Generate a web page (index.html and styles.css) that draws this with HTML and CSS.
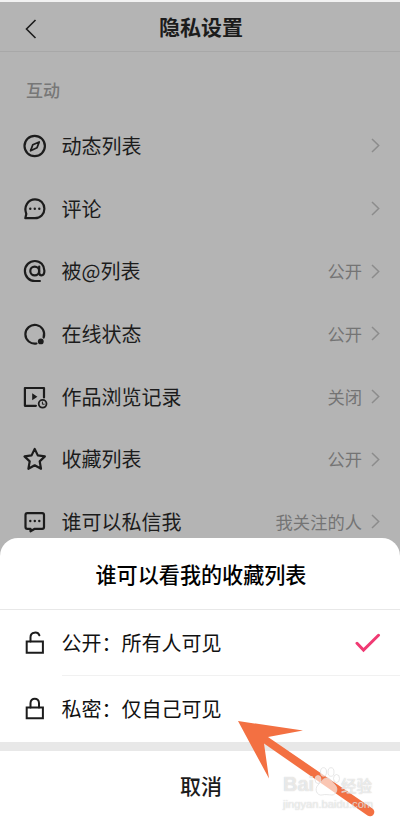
FILE: index.html
```html
<!DOCTYPE html>
<html lang="zh-CN">
<head>
    <meta charset="UTF-8">
    <title>隐私设置</title>
    <link rel="stylesheet" href="styles.css">
</head>
<body>
    <div class="page">
        <header class="topbar">
            <svg class="back" width="12" height="20" viewBox="0 0 12 20"><path d="M10.5 1L1.5 10l9 9"/></svg>
            <h1>隐私设置</h1>
        </header>
        <h2 class="section">互动</h2>
        <ul class="list">
            <li>
                <svg class="icon" width="26" height="26" viewBox="0 0 26 26"><circle cx="12.700" cy="13" r="10.2"/><path class="thin" d="M17.200 9l-2.200 5.800-6.400 2.900 2.200-5.900z"/></svg>
                <span class="label">动态列表</span>
                <svg class="arrow" width="9" height="15" viewBox="0 0 9 15"><path d="M1 1l6.7 6.5L1 14"/></svg>
            </li>
            <li>
                <svg class="icon" width="26" height="26" viewBox="0 0 26 26"><path d="M3.300 22.200l1-4.200C1.500 10.500 6 3.300 13 3.300c5.400 0 9.400 4.100 9.400 9.400s-4 9.500-9.400 9.500z"/><g class="dots"><circle cx="8.300" cy="12.800" r="1.200"/><circle cx="12.800" cy="12.800" r="1.200"/><circle cx="17.300" cy="12.800" r="1.200"/></g></svg>
                <span class="label">评论</span>
                <svg class="arrow" width="9" height="15" viewBox="0 0 9 15"><path d="M1 1l6.7 6.5L1 14"/></svg>
            </li>
            <li>
                <svg class="icon" width="26" height="26" viewBox="0 0 26 26"><circle cx="12.700" cy="13" r="4.400"/><path d="M17.200 8.500v6.300c0 1.700.9 2.500 2.300 2.500 2 0 2.900-1.700 2.900-4.500C22.400 7.300 18.400 3 12.900 3S2.900 7.400 2.900 13s4.400 10 10 10h5"/></svg>
                <span class="label">被@列表</span>
                <span class="value">公开</span>
                <svg class="arrow" width="9" height="15" viewBox="0 0 9 15"><path d="M1 1l6.7 6.5L1 14"/></svg>
            </li>
            <li>
                <svg class="icon" width="26" height="26" viewBox="0 0 26 26"><path d="M14.500 22.500A9.400 9.400 0 1 1 21.600 16.500"/><circle class="fill" cx="18.800" cy="20.400" r="2.900"/></svg>
                <span class="label">在线状态</span>
                <span class="value">公开</span>
                <svg class="arrow" width="9" height="15" viewBox="0 0 9 15"><path d="M1 1l6.7 6.5L1 14"/></svg>
            </li>
            <li>
                <svg class="icon" width="26" height="26" viewBox="0 0 26 26"><path d="M22 13.500V4H2.900v17.800h11"/><path class="fill" d="M10.200 9.300v7l5.200-3.500z"/><circle class="thin" cx="20.600" cy="19.800" r="3.900"/><path class="tiny" d="M20.400 18v2.200h1.800"/></svg>
                <span class="label">作品浏览记录</span>
                <span class="value">关闭</span>
                <svg class="arrow" width="9" height="15" viewBox="0 0 9 15"><path d="M1 1l6.7 6.5L1 14"/></svg>
            </li>
            <li>
                <svg class="icon" width="26" height="26" viewBox="0 0 26 26"><path d="M12.700 2.900l3.100 6.500 7.100 1-5.200 5 1.300 7.400-6.300-3.500-6.300 3.500 1.300-7.400-5.200-5 7.100-1z"/></svg>
                <span class="label">收藏列表</span>
                <span class="value">公开</span>
                <svg class="arrow" width="9" height="15" viewBox="0 0 9 15"><path d="M1 1l6.7 6.5L1 14"/></svg>
            </li>
            <li>
                <svg class="icon" width="26" height="26" viewBox="0 0 26 26"><path d="M5.300 4.200h14.900q1.800 0 1.800 1.800v12q0 1.800-1.800 1.800h-7.400L8.500 22.300v-2.500H5.300q-1.800 0-1.800-1.800V6q0-1.800 1.800-1.800z"/><g class="dots"><circle cx="8.300" cy="12" r="1.200"/><circle cx="12.800" cy="12" r="1.200"/><circle cx="17.300" cy="12" r="1.200"/></g></svg>
                <span class="label">谁可以私信我</span>
                <span class="value">我关注的人</span>
                <svg class="arrow" width="9" height="15" viewBox="0 0 9 15"><path d="M1 1l6.7 6.5L1 14"/></svg>
            </li>
        </ul>
    </div>

    <div class="sheet">
        <h3 class="sheet-title">谁可以看我的收藏列表</h3>
        <div class="option">
            <svg class="icon lock" width="26" height="26" viewBox="0 0 26 26"><path d="M4.700 11.500h16.200v11.300H4.700z"/><path d="M8.500 11.500V7.200c0-5.600 7.400-5.900 8.900-1.900"/></svg>
            <div class="option-body">
                <span>公开：所有人可见</span>
                <svg class="check" width="26" height="20" viewBox="0 0 26 20"><path d="M2 10.300l6.500 6.700L23.500 2.300"/></svg>
            </div>
        </div>
        <div class="option">
            <svg class="icon lock" width="26" height="26" viewBox="0 0 26 26"><path d="M4.700 11.500h16.200v10.800H4.700z"/><path d="M8.500 11.500V7.200c0-6 8.500-6 8.500 0v4.300"/></svg>
            <div class="option-body last">
                <span>私密：仅自己可见</span>
            </div>
        </div>
        <button class="cancel" type="button">取消</button>
    </div>

    <svg class="pointer" width="140" height="100" viewBox="0 0 140 100">
        <path d="M0 0l65 9.500-35 6.500L134.500 87.500a4.200 4.200 0 0 1-5 7L26 22.500l5 35z"/>
    </svg>

    <div class="watermark">
        <div class="brand">
            <span class="bai">Bai</span>
            <svg width="27" height="30" viewBox="0 0 27 30"><ellipse cx="4" cy="12.500" rx="3" ry="4"/><ellipse cx="9.500" cy="5" rx="3" ry="4.300"/><ellipse cx="17" cy="5" rx="3" ry="4.300"/><ellipse cx="22.500" cy="11.500" rx="3" ry="4"/><path d="M13 11c4 0 5 4 8 7 4 4 1 10-3 10-3 0-7-1-10 0-5 1-8-6-4-10 3-3 5-7 9-7z"/></svg>
            <span class="cn">经验</span>
        </div>
        <div class="site">jingyan.baidu.com</div>
    </div>
</body>
</html>
```
FILE: styles.css
```css
* {
    box-sizing: border-box;
}
body {
    margin: 0;
    height: 821px;
    overflow: hidden;
    position: relative;
    background: #fff;
    color: #1c1c1c;
    font-family: "Noto Sans CJK SC", sans-serif;
}
h1, h2, h3, ul {
    margin: 0;
    padding: 0;
}
svg {
    display: block;
    flex: none;
    fill: none;
    stroke: #1c1c1c;
}
.page {
    height: 100%;
    border-top: 2px solid #f2f2f2;
    background: #b4b4b4;
}
.topbar {
    display: flex;
    align-items: center;
    height: 50px;
    padding: 0 25px;
    border-bottom: 1px solid #a8a8a8;
}
.topbar h1 {
    flex: 1;
    margin-right: 10px;
    padding-bottom: 1px;
    text-align: center;
    font-size: 21px;
    line-height: 30px;
    font-weight: 700;
}
.back {
    margin-top: 5px;
    stroke-width: 1.6;
}
.section {
    padding: 26px 26px 0;
    height: 62.5px;
    font-size: 17px;
    line-height: 24px;
    font-weight: 500;
    color: #777;
}
.list {
    list-style: none;
}
.list li {
    display: flex;
    align-items: center;
    height: 62.7px;
    padding: 0 20px 0 22px;
}
.icon {
    stroke-width: 2.2;
    stroke-linejoin: round;
    stroke-linecap: round;
}
.icon.lock {
    stroke-width: 2;
    stroke-linejoin: miter;
}
.icon .thin {
    stroke-width: 1.8;
}
.icon .tiny {
    stroke-width: 1;
}
.icon .dots, .icon .fill {
    fill: #1c1c1c;
    stroke: none;
}
.label {
    flex: 1;
    margin-left: 13.5px;
    font-size: 20px;
    line-height: 30px;
}
.value {
    margin-right: 9px;
    font-size: 17.3px;
    line-height: 26px;
    color: #747474;
}
.arrow {
    stroke: #8c8c8c;
    stroke-width: 1.5;
}
.sheet {
    position: absolute;
    left: 0;
    right: 0;
    top: 537.5px;
    bottom: 0;
    background: #fff;
    border-radius: 18px 18px 0 0;
    color: #111;
}
.sheet-title {
    height: 72px;
    padding-left: 2px;
    border-bottom: 1px solid #e8e8e8;
    text-align: center;
    font-size: 21.1px;
    line-height: 72px;
    font-weight: 500;
    color: #000;
}
.option {
    display: flex;
    align-items: center;
    height: 66px;
    padding-left: 22px;
}
.option-body {
    flex: 1;
    display: flex;
    align-items: center;
    justify-content: space-between;
    height: 100%;
    margin-left: 13.5px;
    padding: 1px 19px 0 0;
    border-bottom: 1px solid #f1f1f1;
    font-size: 20px;
}
.option-body.last {
    border-bottom: none;
    padding-top: 0;
}
.check {
    stroke: #f03a73;
    stroke-width: 3;
    stroke-linecap: round;
}
.cancel {
    display: block;
    width: 100%;
    height: 80px;
    padding: 0 0 2px 2px;
    border: 0;
    border-top: 9px solid #e8e8e8;
    background: #fff;
    color: #1c1c1c;
    font-family: inherit;
    font-size: 21px;
    font-weight: 500;
}
.pointer {
    position: absolute;
    left: 238px;
    top: 721px;
    fill: #f37042;
    stroke: none;
}
.watermark {
    position: absolute;
    left: 283px;
    top: 766px;
    width: 94px;
    color: rgba(255, 255, 255, 0.65);
    text-shadow: 0 0 1px rgba(150, 150, 150, 0.6);
}
.brand {
    display: flex;
    align-items: flex-end;
    height: 31px;
}
.brand svg {
    fill: rgba(255, 255, 255, 0.6);
    stroke: #ddd;
    stroke-width: 0.7;
}
.bai {
    width: 31px;
    font-family: "Liberation Sans", sans-serif;
    font-size: 20px;
    line-height: 25px;
    font-weight: 700;
}
.cn {
    font-size: 15.5px;
    line-height: 23px;
    font-weight: 500;
}
.site {
    font-family: "Liberation Sans", sans-serif;
    font-size: 11.2px;
    line-height: 14px;
}
```
